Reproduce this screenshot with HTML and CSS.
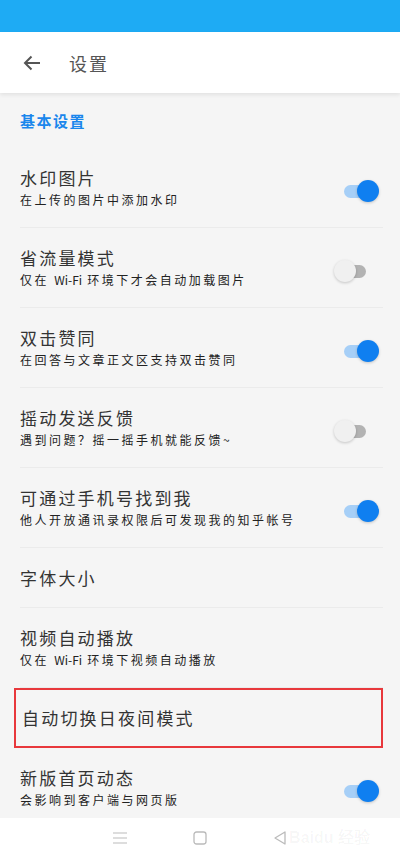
FILE: index.html
```html
<!DOCTYPE html>
<html lang="zh-CN">
<head>
  <meta charset="UTF-8">
  <meta name="viewport" content="width=device-width, initial-scale=1.0">
  <title>设置</title>
  <link rel="stylesheet" href="styles.css">
</head>
<body>
  <div class="status-bar"></div>

  <div class="toolbar">
    <svg class="back" width="20" height="20" viewBox="0 0 20 20">
      <path d="M18 10H3M9.5 3.5L3 10l6.5 6.5" fill="none" stroke="#555" stroke-width="2"/>
    </svg>
    <span class="title">设置</span>
  </div>

  <div class="content">
    <div class="section">基本设置</div>

    <div class="row">
      <div class="text">
        <div class="name">水印图片</div>
        <div class="desc">在上传的图片中添加水印</div>
      </div>
      <span class="switch on"></span>
    </div>

    <div class="row">
      <div class="text">
        <div class="name">省流量模式</div>
        <div class="desc">仅在 <span class="latin">Wi-Fi</span> 环境下才会自动加载图片</div>
      </div>
      <span class="switch"></span>
    </div>

    <div class="row">
      <div class="text">
        <div class="name">双击赞同</div>
        <div class="desc">在回答与文章正文区支持双击赞同</div>
      </div>
      <span class="switch on"></span>
    </div>

    <div class="row">
      <div class="text">
        <div class="name">摇动发送反馈</div>
        <div class="desc">遇到问题？摇一摇手机就能反馈~</div>
      </div>
      <span class="switch"></span>
    </div>

    <div class="row">
      <div class="text">
        <div class="name">可通过手机号找到我</div>
        <div class="desc">他人开放通讯录权限后可发现我的知乎帐号</div>
      </div>
      <span class="switch on"></span>
    </div>

    <div class="row short">
      <div class="text">
        <div class="name">字体大小</div>
      </div>
    </div>

    <div class="row">
      <div class="text">
        <div class="name">视频自动播放</div>
        <div class="desc">仅在 <span class="latin">Wi-Fi</span> 环境下视频自动播放</div>
      </div>
    </div>

    <div class="row short marked">
      <div class="text">
        <div class="name">自动切换日夜间模式</div>
      </div>
    </div>

    <div class="row last">
      <div class="text">
        <div class="name">新版首页动态</div>
        <div class="desc">会影响到客户端与网页版</div>
      </div>
      <span class="switch on"></span>
    </div>
  </div>

  <div class="nav-bar">
    <svg width="16" height="14" viewBox="0 0 16 14">
      <path d="M1 2h14M1 7h14M1 12h14" stroke="#bbb" stroke-width="1.2"/>
    </svg>
    <svg width="16" height="16" viewBox="0 0 16 16">
      <rect x="2" y="2" width="12" height="12" rx="2.5" fill="none" stroke="#bbb" stroke-width="1.3"/>
    </svg>
    <svg width="16" height="16" viewBox="0 0 16 16">
      <path d="M13 2L3 8l10 6z" fill="none" stroke="#bbb" stroke-width="1.3" stroke-linejoin="round"/>
    </svg>
    <span class="watermark">Bai<b>du</b> 经验</span>
  </div>
</body>
</html>
```

FILE: styles.css
```css
body {
  margin: 0;
  background: #f5f5f5;
  font-family: "Noto Sans CJK SC", "Noto Sans", sans-serif;
  color: #222;
  width: 400px;
  height: 857px;
  overflow: hidden;
  position: relative;
}
.status-bar {
  height: 32px;
  background: #1eabf4;
}
.toolbar {
  height: 61px;
  background: #fff;
  display: flex;
  align-items: center;
  padding-left: 22px;
  box-shadow: 0 2px 4px rgba(0,0,0,0.08);
  position: relative;
}
.toolbar .title {
  margin-left: 27px;
  font-size: 18px;
  color: #555;
  letter-spacing: 2px;
}
.section {
  height: 55px;
  padding-left: 20px;
  display: flex;
  align-items: center;
  font-size: 15px;
  font-weight: bold;
  color: #1a86ec;
  letter-spacing: 1.5px;
}
.row {
  height: 80px;
  margin: 0 17px 0 20px;
  border-bottom: 1px solid #ebebeb;
  display: flex;
  align-items: center;
  justify-content: space-between;
  box-sizing: border-box;
}
.row.short {
  height: 60px;
}
.row.last {
  border-bottom: none;
}
.row.marked {
  margin-left: 14px;
  padding-left: 6px;
  border: 2px solid #e8383c;
  margin-right: 17px;
}
.name {
  font-size: 17px;
  line-height: 22px;
  color: #333;
  letter-spacing: 2.2px;
}
.desc {
  font-size: 12px;
  line-height: 18px;
  margin-top: 2px;
  color: #222;
  letter-spacing: 2.5px;
}
.desc .latin {
  letter-spacing: 0;
}
.switch {
  width: 36px;
  height: 24px;
  position: relative;
  margin-top: 6px;
  flex-shrink: 0;
}
.switch::before {
  content: "";
  position: absolute;
  left: -8px;
  right: 17px;
  top: 6px;
  height: 13px;
  border-radius: 7px;
  background: #b3b3b3;
}
.switch::after {
  content: "";
  position: absolute;
  left: -13px;
  top: 1px;
  width: 22px;
  height: 22px;
  border-radius: 50%;
  background: #f0f0f0;
  box-shadow: 0 1px 3px rgba(0,0,0,0.2);
}
.switch.on::before {
  left: -3px;
  right: 13px;
  background: #a6cff7;
}
.switch.on::after {
  left: 10px;
  background: #0f7ff0;
}
.nav-bar {
  position: absolute;
  left: 0;
  right: 0;
  bottom: 0;
  height: 39px;
  background: #fff;
  display: flex;
  align-items: center;
  justify-content: space-around;
  padding: 0 80px;
}
.watermark {
  position: absolute;
  right: 30px;
  top: 6px;
  font-family: "Liberation Sans", sans-serif;
  font-size: 16px;
  font-weight: bold;
  color: rgba(0,0,0,0.04);
}
```
